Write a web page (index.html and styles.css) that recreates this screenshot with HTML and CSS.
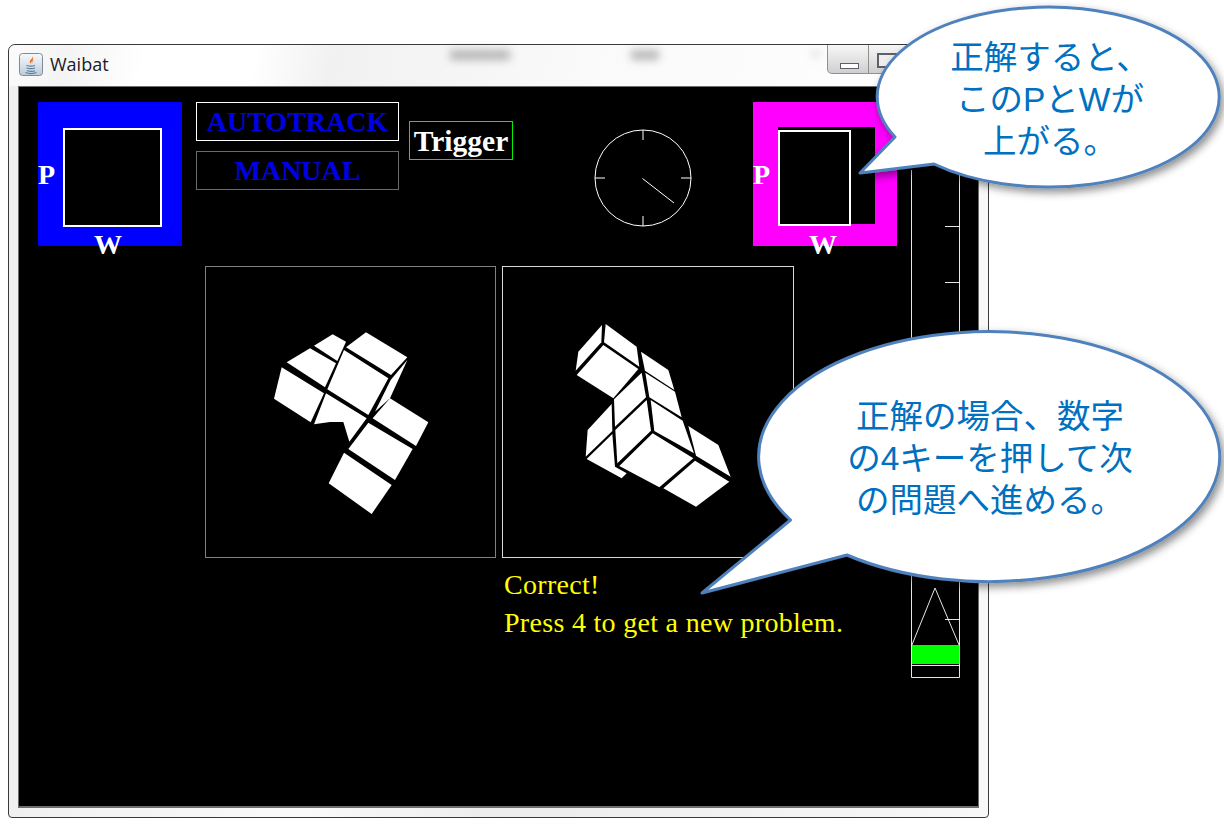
FILE: index.html
```html
<!DOCTYPE html>
<html lang="ja">
<head>
<meta charset="utf-8">
<title>Waibat</title>
<link rel="stylesheet" href="styles.css">
</head>
<body>
<div class="window">
  <div class="titlebar">
    <svg class="app-icon" viewBox="0 0 24 24" width="24" height="24">
      <defs><linearGradient id="ig" x1="0" y1="0" x2="0" y2="1"><stop offset="0" stop-color="#f8fafc"/><stop offset="1" stop-color="#bccbd8"/></linearGradient></defs>
      <rect x="0.5" y="0.5" width="23" height="22" rx="3" fill="url(#ig)" stroke="#7d8c99"/>
      <path d="M13.5 3c1 2.5-3.5 4-2.6 6.6.3.9 1.2 1.4 1.2 1.4-1.2-2.2 3.6-3.6 1.4-8z" fill="#e8701a"/>
      <path d="M15 6.5c-2 1-3 2-1.8 4.4-.6-2 .9-3 1.8-4.4z" fill="#e8701a"/>
      <path d="M7.500 12.500c2.500.6 6.500.6 8.500 0M7.500 15c2.500.6 6.500.6 8.500 0M8 17.500c2.500 1 6 1 8 0.200M6.500 19.500c3 1.200 8 1.200 11 0" fill="none" stroke="#5b7f9e" stroke-width="1.200"/>
    </svg>
    <span class="title">Waibat</span>
    <span class="blur-blob blob-a"></span>
    <span class="blur-blob blob-b"></span>
    <span class="blur-blob blob-c"></span>
    <div class="controls">
      <div class="ctl ctl-min"><span class="min-glyph"></span></div>
      <div class="ctl ctl-max"><span class="max-glyph"></span></div>
    </div>
  </div>
  <div class="canvas">
    <div class="meter meter-left">
      <div class="meter-rect meter-rect-left"></div>
      <span class="meter-p">P</span>
      <span class="meter-w">W</span>
    </div>
    <div class="btn btn-auto">AUTOTRACK</div>
    <div class="btn btn-manual">MANUAL</div>
    <div class="btn btn-trigger">Trigger</div>

    <svg class="clock" viewBox="0 0 100 100" width="100" height="100">
      <circle cx="50" cy="50" r="48" fill="none" stroke="#fff" stroke-width="1"/>
      <path d="M50 2v10M50 88v10M2 50h10M88 50h10M49.500 50.500L81 75" fill="none" stroke="#fff" stroke-width="1"/>
    </svg>

    <div class="meter meter-right">
      <div class="meter-hole"></div>
      <div class="meter-rect meter-rect-right"></div>
      <span class="meter-p">P</span>
      <span class="meter-w">W</span>
    </div>

    <div class="pane pane-left">
      <svg class="shape shape-left" viewBox="0 0 780 690" width="260" height="230">
        <g fill="#fff">
          <polygon points="342,137 398,103 438,125 412,183"/>
          <polygon points="260,187 330,145 408,190 375,262"/>
          <polygon points="245,202 372,280 332,367 222,296"/>
          <polygon points="432,150 565,235 505,345 382,268"/>
          <polygon points="498,97 622,172 573,225 438,142"/>
          <polygon points="622,180 570,295 525,335 572,240"/>
          <polygon points="378,280 500,355 448,425 430,366 390,366 342,373"/>
          <polygon points="570,295 685,367 648,438 518,355"/>
          <polygon points="505,368 638,447 585,540 445,447"/>
          <polygon points="432,458 575,555 515,642 386,550"/>
        </g>
      </svg>
    </div>
    <div class="pane pane-right">
      <svg class="shape shape-right" viewBox="0 0 660 660" width="220" height="220">
        <g fill="#fff">
          <polygon points="186,75 184,127 107,212 115,155"/>
          <polygon points="197,72 290,140 298,200 192,127"/>
          <polygon points="190,135 295,207 220,295 110,225"/>
          <polygon points="303,155 385,210 403,270 315,212"/>
          <polygon points="305,218 318,292 225,380 222,298"/>
          <polygon points="316,218 405,275 425,352 328,292"/>
          <polygon points="320,300 333,392 232,490 226,390"/>
          <polygon points="332,300 428,362 462,460 343,393"/>
          <polygon points="215,312 217,393 137,470 143,390"/>
          <polygon points="217,402 225,500 260,520 245,535 140,477"/>
          <polygon points="338,400 460,475 358,562 238,498"/>
          <polygon points="445,378 535,435 572,530 468,467"/>
          <polygon points="465,482 568,545 468,620 370,565"/>
        </g>
      </svg>
    </div>

    <div class="message">
      <p class="message-line">Correct!</p>
      <p class="message-line">Press 4 to get a new problem.</p>
    </div>

    <svg class="gauge" viewBox="0 0 50 510" width="50" height="510">
      <path d="M0.500 0V507.500H48.500V0M34 56.500H48M34 112.500H48M34 168.500H48M34 224.500H48M34 280.500H48M34 336.500H48M34 392.500H48M34 449.500H48M0.500 476L24 418L48.500 476M0.500 495.500H48.500" fill="none" stroke="#fff" stroke-width="1" opacity="0.9"/>
      <rect x="1" y="475" width="47.500" height="19" fill="#00ff00"/>
    </svg>
  </div>
</div>

<div class="callout callout-top">
  <svg class="callout-shape" viewBox="850 0 374 200" width="374" height="200">
    <defs><filter id="sh1" x="-10%" y="-10%" width="125%" height="130%"><feDropShadow dx="3" dy="4" stdDeviation="4" flood-color="#000" flood-opacity="0.45"/></filter></defs>
    <path d="M895 137A171 90 0 1 1 934 164L860 173Z" fill="#fff" stroke="#4f81bd" stroke-width="3" stroke-linejoin="round" filter="url(#sh1)"/>
  </svg>
  <div class="callout-text callout-text-top">正解すると、<br>このPとWが<br>上がる。</div>
</div>

<div class="callout callout-bottom">
  <svg class="callout-shape" viewBox="695 325 529 280" width="529" height="280">
    <defs><filter id="sh2" x="-10%" y="-10%" width="125%" height="130%"><feDropShadow dx="3" dy="4" stdDeviation="4" flood-color="#000" flood-opacity="0.45"/></filter></defs>
    <path d="M790.500 520A230.500 125 0 1 1 847 555L702 593Z" fill="#fff" stroke="#4f81bd" stroke-width="3" stroke-linejoin="round" filter="url(#sh2)"/>
  </svg>
  <div class="callout-text callout-text-bottom">正解の場合、数字<br>の4キーを押して次<br>の問題へ進める。</div>
</div>
</body>
</html>
```
FILE: styles.css
```css
* { box-sizing: border-box; }
html, body { margin: 0; padding: 0; background: #fff; }
body { width: 1224px; height: 827px; position: relative; overflow: hidden; }

.window {
  position: absolute; left: 8px; top: 44px; width: 981px; height: 774px;
  display: flex; flex-direction: column;
  border: 1px solid #3a3a3a; border-radius: 7px 7px 4px 4px;
  background: linear-gradient(90deg, #f0f0f0 0, #fafafa 30%, #ececec 50%, #f8f8f8 100%);
  padding: 0 9px 9px;
}
.titlebar {
  position: relative; height: 41px; flex: none;
  display: flex; align-items: center;
  margin: 0 -9px; padding: 0 0 3px 10px;
  border-radius: 7px 7px 0 0;
  background: linear-gradient(100deg, #fbfbfb 0, #f4f4f4 6%, #fff 14%, #fff 25%, #f1f1f1 33%, #fafafa 60%, #ffffff 100%);
}
.app-icon { flex: none; margin-top: 1px; }
.title { margin-left: 7px; font: 18px "Open Sans", "Noto Sans", sans-serif; color: #1a1a2a; }
.blur-blob { position: absolute; background: #8a8a8a; filter: blur(4px); opacity: .6; }
.blob-a { left: 441px; top: 5px; width: 60px; height: 10px; }
.blob-b { left: 622px; top: 5px; width: 28px; height: 10px; }
.blob-c { left: 802px; top: 5px; width: 10px; height: 8px; opacity: .2; }
.controls { position: absolute; right: 0; top: 0; display: flex; left: 818px; }
.ctl {
  height: 29px; border: 1px solid #8f8f8f; border-top: 0;
  background: linear-gradient(#f6f6f6, #e4e4e4 50%, #cfcfcf);
  position: relative;
}
.ctl-min { width: 42px; border-radius: 0 0 0 5px; }
.ctl-max { width: 40px; border-left: 0; }
.min-glyph { position: absolute; left: 12px; top: 18px; width: 19px; height: 6px; border: 1px solid #5c6068; background: #fff; }
.max-glyph { position: absolute; left: 8px; top: 8px; width: 20px; height: 15px; border: 2px solid #5c6068; background: #eee; }

.canvas {
  position: relative; flex: 1; background: #000;
  border: 1px solid #6d6d6d; border-width: 1px 1px 2px;
  overflow: hidden;
}

/* items placed on the application's free canvas; coordinates relative to it */
.meter { position: absolute; top: 15px; width: 144px; height: 144px; }
.meter-left { left: 19px; background: #0000ff; }
.meter-right { left: 734px; background: #ff00ff; }
.meter-rect { position: absolute; border: 2px solid #fff; background: #000; }
.meter-rect-left { left: 25px; top: 26px; width: 99px; height: 99px; }
.meter-rect-right { left: 25px; top: 28px; width: 73px; height: 96px; }
.meter-hole { position: absolute; left: 25px; top: 25px; width: 97px; height: 97px; background: #000; }
.meter-p, .meter-w { position: absolute; font: bold 28px/26px "Liberation Serif", serif; color: #fff; }
.meter-p { left: 0; top: 60px; }
.meter-w { left: 56px; top: 130px; }

.btn {
  position: absolute; display: flex; align-items: center; justify-content: center;
  font: bold 28px/1 "Liberation Serif", serif; color: #0000e6;
}
.btn-auto { left: 177px; top: 15px; width: 203px; height: 39px; border: 1px solid #fff; }
.btn-manual { left: 177px; top: 64px; width: 203px; height: 39px; border: 1px solid #6a6a6a; }
.btn-trigger { left: 390px; top: 34px; width: 104px; height: 39px; padding-top: 2px; border: 1px solid #00f000; color: #fff; font-size: 29.500px; }

.clock { position: absolute; left: 574px; top: 41px; }

.pane { position: absolute; top: 179px; width: 291px; height: 292px; border: 1px solid #808080; }
.pane-left { left: 186px; }
.pane-right { left: 483px; width: 292px; border-color: #d8d8d8; }
.shape { position: absolute; display: block; }
.shape-left { left: -6px; top: 33px; }
.shape-right { left: 37px; top: 33px; }

.message { position: absolute; left: 485px; top: 479px; color: #ffff00; font: 28px/38px "Liberation Serif", serif; letter-spacing: 0.3px; }
.message-line { margin: 0; white-space: nowrap; }

.gauge { position: absolute; left: 892px; top: 83px; }

/* speech bubbles lying over the window */
.callout { position: absolute; }
.callout-top { left: 850px; top: 0; width: 374px; height: 200px; }
.callout-bottom { left: 695px; top: 325px; width: 529px; height: 280px; }
.callout-shape { position: absolute; left: 0; top: 0; overflow: visible; }
.callout-text {
  position: absolute; text-align: center; white-space: nowrap;
  color: #0070c0; font: 33.5px/42px "Liberation Sans", "Noto Sans CJK JP", sans-serif;
}
.callout-text-top { left: 2px; width: 396px; top: 37px; }
.callout-text-bottom { left: 95px; width: 400px; top: 71px; }
```
